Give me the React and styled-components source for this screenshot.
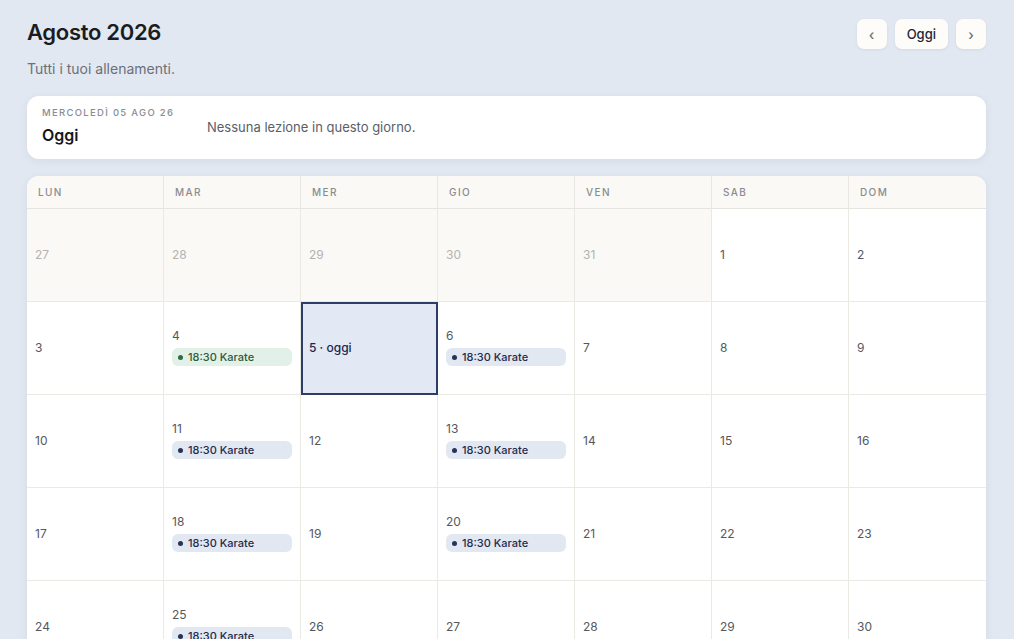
import React from "react";
import styled, { createGlobalStyle } from "styled-components";

const GlobalStyle = createGlobalStyle`
  body {
    margin: 0;
    background: #e2e8f1;
    font-family: Inter, "Noto Sans", sans-serif;
    color: #1c1f26;
  }
`;

const Page = styled.div`
  padding: 18px 28px 40px 27px;
`;

const Header = styled.header`
  display: flex;
  justify-content: space-between;
  align-items: flex-start;
`;

const Title = styled.h1`
  margin: 0;
  font-size: 22px;
  line-height: 28px;
  font-weight: 600;
  letter-spacing: -0.3px;
  color: #1a1c22;
`;

const Subtitle = styled.p`
  margin: 14px 0 0;
  font-size: 14px;
  line-height: 18px;
  color: #6b6f78;
`;

const Nav = styled.div`
  display: flex;
  gap: 8px;
  margin-top: 1px;
`;

const NavButton = styled.button`
  height: 30px;
  min-width: 30px;
  padding: 0 ${({ $wide }) => ($wide ? "12px" : "0")};
  border: none;
  border-radius: 7px;
  background: #fdfcf9;
  box-shadow: 0 1px 3px rgba(40, 50, 80, 0.08);
  font-family: inherit;
  font-size: ${({ $wide }) => ($wide ? "13px" : "14px")};
  font-weight: 500;
  color: ${({ $wide }) => ($wide ? "#1d2436" : "#6a6f7a")};
  cursor: pointer;
`;

const TodayCard = styled.section`
  margin-top: 18px;
  height: 63px;
  box-sizing: border-box;
  padding: 10px 16px 14px 15px;
  display: flex;
  align-items: center;
  background: #ffffff;
  border-radius: 12px;
  box-shadow: 0 2px 8px rgba(40, 50, 80, 0.07);
`;

const TodayInfo = styled.div`
  width: 165px;
  display: flex;
  flex-direction: column;
  gap: 5px;
`;

const TodayLabel = styled.span`
  font-size: 9.5px;
  line-height: 14px;
  font-weight: 500;
  letter-spacing: 1.3px;
  color: #8a8d93;
`;

const TodayName = styled.span`
  font-size: 16px;
  line-height: 20px;
  font-weight: 600;
  color: #15171c;
`;

const TodayMessage = styled.span`
  font-size: 13px;
  color: #5a5e66;
  margin-top: 3px;
`;

const Calendar = styled.section`
  margin-top: 17px;
  background: #ffffff;
  border-radius: 12px;
  overflow: hidden;
  box-shadow: 0 2px 8px rgba(40, 50, 80, 0.07);
  display: grid;
  grid-template-columns: repeat(7, 1fr);
`;

const WeekDay = styled.div`
  height: 33px;
  box-sizing: border-box;
  padding: 0 11px;
  display: flex;
  align-items: center;
  background: #faf9f6;
  border-bottom: 1px solid #e6e4df;
  border-right: ${({ $last }) => ($last ? "none" : "1px solid #e9e7e2")};
  font-size: 10px;
  font-weight: 500;
  letter-spacing: 1.4px;
  color: #8a8c90;
`;

const Cell = styled.div`
  height: 93px;
  box-sizing: border-box;
  padding: 0 8px;
  display: flex;
  flex-direction: column;
  justify-content: center;
  gap: 4px;
  background: ${({ $outside, $today }) =>
    $today ? "#e2e8f4" : $outside ? "#faf9f6" : "#ffffff"};
  border-right: ${({ $last }) => ($last ? "none" : "1px solid #ebe9e4")};
  border-bottom: 1px solid #ebe9e4;
  outline: ${({ $today }) => ($today ? "2px solid #2c3d66" : "none")};
  outline-offset: -2px;
`;

const DayNumber = styled.span`
  font-size: 12px;
  line-height: 16px;
  font-weight: ${({ $today }) => ($today ? 500 : 400)};
  color: ${({ $outside, $today }) =>
    $today ? "#1c2746" : $outside ? "#b3b3b1" : "#55585e"};
`;

const EventPill = styled.div`
  height: 18px;
  margin-bottom: 2px;
  padding: 0 6px;
  display: flex;
  align-items: center;
  gap: 5px;
  border-radius: 6px;
  background: ${({ $done }) => ($done ? "#e2f1e7" : "#e2e8f2")};
  font-size: 11px;
  font-weight: 500;
  color: ${({ $done }) => ($done ? "#2c5a3f" : "#1f2b4d")};
`;

const Dot = styled.span`
  width: 5px;
  height: 5px;
  border-radius: 50%;
  background: ${({ $done }) => ($done ? "#2f6b48" : "#26335a")};
`;

const weekDays = ["LUN", "MAR", "MER", "GIO", "VEN", "SAB", "DOM"];

// lezioni del mese: martedì e giovedì
const events = { 4: "done", 6: "next", 11: "next", 13: "next", 18: "next", 20: "next", 25: "next" };

const buildDays = () => {
  const days = [27, 28, 29, 30, 31].map((n) => ({ n, outside: true }));
  for (let n = 1; n <= 31; n++) days.push({ n, outside: false });
  for (let n = 1; days.length < 42; n++) days.push({ n, outside: true });
  return days;
};

const App = () => {
  const days = buildDays();

  return (
    <>
      <GlobalStyle />
      <Page>
        <Header>
          <div>
            <Title>Agosto 2026</Title>
            <Subtitle>Tutti i tuoi allenamenti.</Subtitle>
          </div>
          <Nav>
            <NavButton>‹</NavButton>
            <NavButton $wide>Oggi</NavButton>
            <NavButton>›</NavButton>
          </Nav>
        </Header>

        <TodayCard>
          <TodayInfo>
            <TodayLabel>MERCOLEDÌ 05 AGO 26</TodayLabel>
            <TodayName>Oggi</TodayName>
          </TodayInfo>
          <TodayMessage>Nessuna lezione in questo giorno.</TodayMessage>
        </TodayCard>

        <Calendar>
          {weekDays.map((d, i) => (
            <WeekDay key={d} $last={i === 6}>
              {d}
            </WeekDay>
          ))}
          {days.map((day, i) => {
            const today = !day.outside && day.n === 5;
            const ev = !day.outside && events[day.n];
            return (
              <Cell key={i} $outside={day.outside} $today={today} $last={i % 7 === 6}>
                <DayNumber $outside={day.outside} $today={today}>
                  {today ? `${day.n} · oggi` : day.n}
                </DayNumber>
                {ev && (
                  <EventPill $done={ev === "done"}>
                    <Dot $done={ev === "done"} />
                    18:30 Karate
                  </EventPill>
                )}
              </Cell>
            );
          })}
        </Calendar>
      </Page>
    </>
  );
};

export default App;
